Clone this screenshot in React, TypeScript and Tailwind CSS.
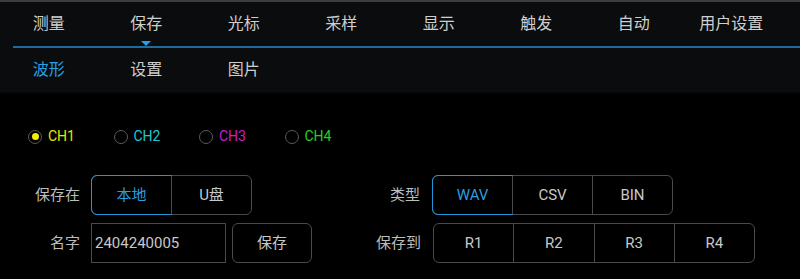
import React from 'react';

const font = { fontFamily: 'Roboto, "Noto Sans CJK SC", sans-serif' };

const mainTabs = ['测量', '保存', '光标', '采样', '显示', '触发', '自动', '用户设置'];
const subTabs = ['波形', '设置', '图片'];

const channels = [
    { name: 'CH1', color: 'text-[#e6e600]', checked: true },
    { name: 'CH2', color: 'text-[#20c6d0]', checked: false },
    { name: 'CH3', color: 'text-[#c81fc8]', checked: false },
    { name: 'CH4', color: 'text-[#22d022]', checked: false },
];

function Segmented({ items, active, width }: { items: string[]; active?: number; width: string }) {
    return (
        <div className={`flex h-[40px] ${width} rounded-[6px] border border-[#4a4a4a]`}>
            {items.map((item, i) => (
                <div
                    key={item}
                    className={`flex flex-1 items-center justify-center text-[15px] ${
                        i > 0 ? 'border-l border-[#4a4a4a]' : ''
                    } ${
                        i === active
                            ? '-m-px rounded-l-[6px] border border-[#1e96dc] text-[#2a9ee2]'
                            : 'text-[#c8c8c8]'
                    }`}
                >
                    {item}
                </div>
            ))}
        </div>
    );
}

export default function App() {
    return (
        <div className="h-[279px] w-[800px] overflow-hidden bg-black" style={font}>
            {/* Top header */}
            <div className="h-[2px] bg-[#3c3c3c]"></div>
            <div className="bg-[#0a0c0d]">
                <div className="grid h-[44px] w-[780px] grid-cols-8">
                    {mainTabs.map((tab, i) => (
                        <div key={tab} className="relative flex items-center justify-center text-[16px] text-[#cfcfcf]">
                            {tab}
                            {i === 1 && (
                                <div className="absolute bottom-0 left-1/2 h-0 w-0 -translate-x-1/2 border-x-[5px] border-t-[5px] border-x-transparent border-t-[#1ea2ee]"></div>
                            )}
                        </div>
                    ))}
                </div>
                <div className="ml-[13px] h-[2px] bg-[#1f6c9c]"></div>
                <div className="grid h-[44px] w-[780px] grid-cols-8 items-center">
                    {subTabs.map((tab, i) => (
                        <div
                            key={tab}
                            className={`text-center text-[16px] ${i === 0 ? 'text-[#25a0e6]' : 'text-[#cfcfcf]'}`}
                        >
                            {tab}
                        </div>
                    ))}
                </div>
            </div>
            <div className="h-[4px] bg-gradient-to-b from-[#0a0c0d] to-black"></div>

            {/* Channels */}
            <div className="mt-[30px] flex pl-[28px]">
                {channels.map((ch) => (
                    <div key={ch.name} className="flex w-[85.5px] items-center gap-[6px]">
                        <div className="flex h-[14px] w-[14px] items-center justify-center rounded-full border border-[#5a5a5a]">
                            {ch.checked && <div className="h-[7px] w-[7px] rounded-full bg-[#f0f000]"></div>}
                        </div>
                        <span className={`text-[14px] ${ch.color}`}>{ch.name}</span>
                    </div>
                ))}
            </div>

            {/* Row 1 */}
            <div className="mt-[28px] flex items-center">
                <div className="w-[80px] text-right text-[15px] text-[#bdbdbd]">保存在</div>
                <div className="ml-[11px]">
                    <Segmented items={['本地', 'U盘']} active={0} width="w-[161px]" />
                </div>
                <div className="ml-[88px] w-[80px] text-right text-[15px] text-[#bdbdbd]">类型</div>
                <div className="ml-[12px]">
                    <Segmented items={['WAV', 'CSV', 'BIN']} active={0} width="w-[241px]" />
                </div>
            </div>

            {/* Row 2 */}
            <div className="mt-[8px] flex items-center">
                <div className="w-[80px] text-right text-[15px] text-[#bdbdbd]">名字</div>
                <div className="ml-[11px] flex h-[40px] w-[135px] items-center border border-[#4a4a4a] pl-[3px] text-[15px] text-[#c8c8c8]">
                    2404240005
                </div>
                <div className="ml-[6px] flex h-[40px] w-[80px] items-center justify-center rounded-[6px] border border-[#4a4a4a] text-[15px] text-[#c8c8c8]">
                    保存
                </div>
                <div className="ml-[29px] w-[80px] text-right text-[15px] text-[#bdbdbd]">保存到</div>
                <div className="ml-[12px]">
                    <Segmented items={['R1', 'R2', 'R3', 'R4']} width="w-[322px]" />
                </div>
            </div>

            <div className="mt-[16px] h-px bg-[#3a3a3a]"></div>
        </div>
    );
}
